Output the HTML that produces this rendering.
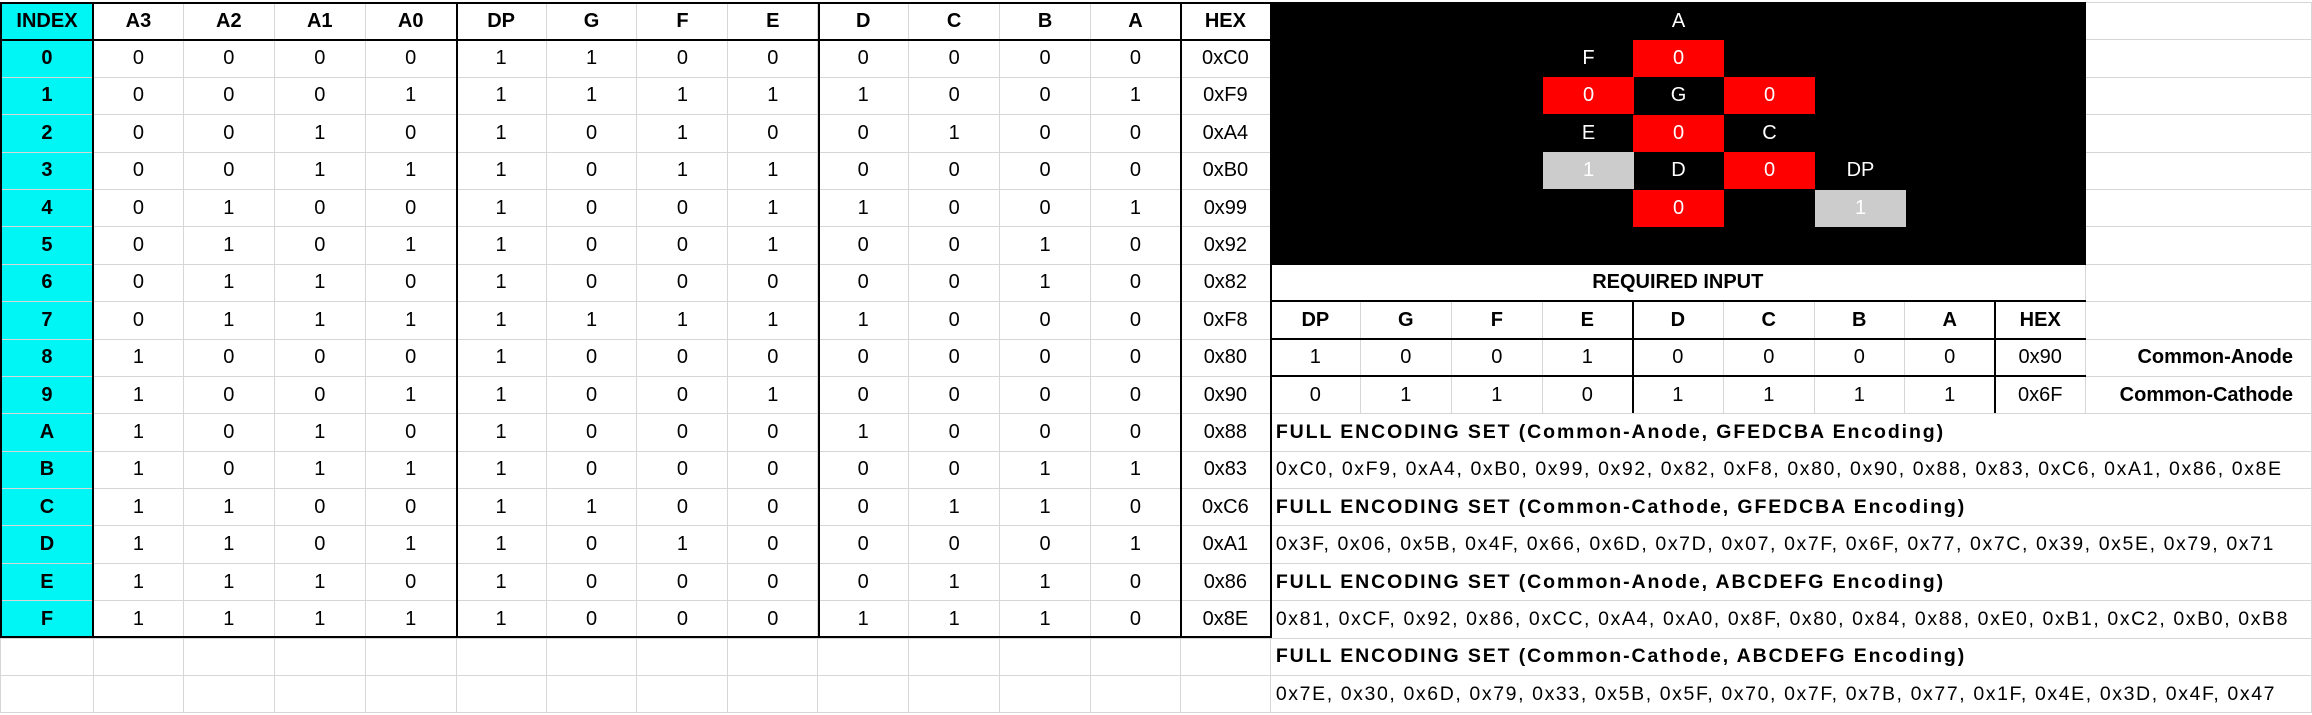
<!DOCTYPE html>
<html><head><meta charset="utf-8"><style>
body{margin:0;background:#fff;width:2312px;height:715px;overflow:hidden;position:relative;font-family:"Liberation Sans",sans-serif;}
table{position:absolute;left:0;top:2px;border-collapse:collapse;table-layout:fixed;}
td{border:1px solid #d6d6d6;height:36.4px;padding:0;text-align:center;font-size:20px;color:#000;white-space:nowrap;overflow:visible;}
td.i{background:#00f5f5;font-weight:bold;}
td.b{font-weight:bold;}
td.t{text-align:left;padding-left:5px;font-size:19.5px;letter-spacing:1.6px;}
td.tb{text-align:left;padding-left:5px;font-weight:bold;font-size:19.5px;letter-spacing:1.9px;}
td.blk{background:#000;border-color:#000;}
td.req{font-weight:bold;}
td.nm{font-weight:bold;text-align:right;padding-right:18px;}
.l{position:absolute;background:#000;}
.s{position:absolute;width:91px;height:37px;line-height:37px;text-align:center;font-size:20px;color:#fff;}
.r{background:#ff0000;}
.g{background:#cccccc;}
</style></head><body>
<table>
<colgroup><col style="width:93px"><col style="width:90px"><col style="width:91px"><col style="width:91px"><col style="width:91px"><col style="width:90px"><col style="width:91px"><col style="width:91px"><col style="width:90px"><col style="width:91px"><col style="width:91px"><col style="width:91px"><col style="width:90px"><col style="width:90px"><col style="width:90px"><col style="width:91px"><col style="width:91px"><col style="width:90px"><col style="width:91px"><col style="width:91px"><col style="width:90px"><col style="width:91px"><col style="width:90px"><col style="width:226px"></colgroup>
<tr><td class="i">INDEX</td><td class="b">A3</td><td class="b">A2</td><td class="b">A1</td><td class="b">A0</td><td class="b">DP</td><td class="b">G</td><td class="b">F</td><td class="b">E</td><td class="b">D</td><td class="b">C</td><td class="b">B</td><td class="b">A</td><td class="b">HEX</td><td class="blk" colspan="9" rowspan="7"></td><td></td></tr>
<tr><td class="i">0</td><td>0</td><td>0</td><td>0</td><td>0</td><td>1</td><td>1</td><td>0</td><td>0</td><td>0</td><td>0</td><td>0</td><td>0</td><td>0xC0</td><td></td></tr>
<tr><td class="i">1</td><td>0</td><td>0</td><td>0</td><td>1</td><td>1</td><td>1</td><td>1</td><td>1</td><td>1</td><td>0</td><td>0</td><td>1</td><td>0xF9</td><td></td></tr>
<tr><td class="i">2</td><td>0</td><td>0</td><td>1</td><td>0</td><td>1</td><td>0</td><td>1</td><td>0</td><td>0</td><td>1</td><td>0</td><td>0</td><td>0xA4</td><td></td></tr>
<tr><td class="i">3</td><td>0</td><td>0</td><td>1</td><td>1</td><td>1</td><td>0</td><td>1</td><td>1</td><td>0</td><td>0</td><td>0</td><td>0</td><td>0xB0</td><td></td></tr>
<tr><td class="i">4</td><td>0</td><td>1</td><td>0</td><td>0</td><td>1</td><td>0</td><td>0</td><td>1</td><td>1</td><td>0</td><td>0</td><td>1</td><td>0x99</td><td></td></tr>
<tr><td class="i">5</td><td>0</td><td>1</td><td>0</td><td>1</td><td>1</td><td>0</td><td>0</td><td>1</td><td>0</td><td>0</td><td>1</td><td>0</td><td>0x92</td><td></td></tr>
<tr><td class="i">6</td><td>0</td><td>1</td><td>1</td><td>0</td><td>1</td><td>0</td><td>0</td><td>0</td><td>0</td><td>0</td><td>1</td><td>0</td><td>0x82</td><td class="req" colspan="9">REQUIRED INPUT</td><td></td></tr>
<tr><td class="i">7</td><td>0</td><td>1</td><td>1</td><td>1</td><td>1</td><td>1</td><td>1</td><td>1</td><td>1</td><td>0</td><td>0</td><td>0</td><td>0xF8</td><td class="b">DP</td><td class="b">G</td><td class="b">F</td><td class="b">E</td><td class="b">D</td><td class="b">C</td><td class="b">B</td><td class="b">A</td><td class="b">HEX</td><td></td></tr>
<tr><td class="i">8</td><td>1</td><td>0</td><td>0</td><td>0</td><td>1</td><td>0</td><td>0</td><td>0</td><td>0</td><td>0</td><td>0</td><td>0</td><td>0x80</td><td>1</td><td>0</td><td>0</td><td>1</td><td>0</td><td>0</td><td>0</td><td>0</td><td>0x90</td><td class="nm">Common-Anode</td></tr>
<tr><td class="i">9</td><td>1</td><td>0</td><td>0</td><td>1</td><td>1</td><td>0</td><td>0</td><td>1</td><td>0</td><td>0</td><td>0</td><td>0</td><td>0x90</td><td>0</td><td>1</td><td>1</td><td>0</td><td>1</td><td>1</td><td>1</td><td>1</td><td>0x6F</td><td class="nm">Common-Cathode</td></tr>
<tr><td class="i">A</td><td>1</td><td>0</td><td>1</td><td>0</td><td>1</td><td>0</td><td>0</td><td>0</td><td>1</td><td>0</td><td>0</td><td>0</td><td>0x88</td><td class="tb" colspan="10">FULL ENCODING SET (Common-Anode, GFEDCBA Encoding)</td></tr>
<tr><td class="i">B</td><td>1</td><td>0</td><td>1</td><td>1</td><td>1</td><td>0</td><td>0</td><td>0</td><td>0</td><td>0</td><td>1</td><td>1</td><td>0x83</td><td class="t" colspan="10">0xC0, 0xF9, 0xA4, 0xB0, 0x99, 0x92, 0x82, 0xF8, 0x80, 0x90, 0x88, 0x83, 0xC6, 0xA1, 0x86, 0x8E</td></tr>
<tr><td class="i">C</td><td>1</td><td>1</td><td>0</td><td>0</td><td>1</td><td>1</td><td>0</td><td>0</td><td>0</td><td>1</td><td>1</td><td>0</td><td>0xC6</td><td class="tb" colspan="10">FULL ENCODING SET (Common-Cathode, GFEDCBA Encoding)</td></tr>
<tr><td class="i">D</td><td>1</td><td>1</td><td>0</td><td>1</td><td>1</td><td>0</td><td>1</td><td>0</td><td>0</td><td>0</td><td>0</td><td>1</td><td>0xA1</td><td class="t" colspan="10">0x3F, 0x06, 0x5B, 0x4F, 0x66, 0x6D, 0x7D, 0x07, 0x7F, 0x6F, 0x77, 0x7C, 0x39, 0x5E, 0x79, 0x71</td></tr>
<tr><td class="i">E</td><td>1</td><td>1</td><td>1</td><td>0</td><td>1</td><td>0</td><td>0</td><td>0</td><td>0</td><td>1</td><td>1</td><td>0</td><td>0x86</td><td class="tb" colspan="10">FULL ENCODING SET (Common-Anode, ABCDEFG Encoding)</td></tr>
<tr><td class="i">F</td><td>1</td><td>1</td><td>1</td><td>1</td><td>1</td><td>0</td><td>0</td><td>0</td><td>1</td><td>1</td><td>1</td><td>0</td><td>0x8E</td><td class="t" colspan="10">0x81, 0xCF, 0x92, 0x86, 0xCC, 0xA4, 0xA0, 0x8F, 0x80, 0x84, 0x88, 0xE0, 0xB1, 0xC2, 0xB0, 0xB8</td></tr>
<tr><td></td><td></td><td></td><td></td><td></td><td></td><td></td><td></td><td></td><td></td><td></td><td></td><td></td><td></td><td class="tb" colspan="10">FULL ENCODING SET (Common-Cathode, ABCDEFG Encoding)</td></tr>
<tr><td></td><td></td><td></td><td></td><td></td><td></td><td></td><td></td><td></td><td></td><td></td><td></td><td></td><td></td><td class="t" colspan="10">0x7E, 0x30, 0x6D, 0x79, 0x33, 0x5B, 0x5F, 0x70, 0x7F, 0x7B, 0x77, 0x1F, 0x4E, 0x3D, 0x4F, 0x47</td></tr>
</table>

<div class="s" style="left:1633px;top:3px">A</div>
<div class="s" style="left:1543px;top:40px">F</div>
<div class="s r" style="left:1633px;top:40px">0</div>
<div class="s r" style="left:1543px;top:77px">0</div>
<div class="s" style="left:1633px;top:77px">G</div>
<div class="s r" style="left:1724px;top:77px">0</div>
<div class="s" style="left:1543px;top:115px">E</div>
<div class="s r" style="left:1633px;top:115px">0</div>
<div class="s" style="left:1724px;top:115px">C</div>
<div class="s g" style="left:1543px;top:152px">1</div>
<div class="s" style="left:1633px;top:152px">D</div>
<div class="s r" style="left:1724px;top:152px">0</div>
<div class="s" style="left:1815px;top:152px">DP</div>
<div class="s r" style="left:1633px;top:190px">0</div>
<div class="s g" style="left:1815px;top:190px">1</div>

<div class="l" style="left:0;top:2px;width:1272px;height:2px"></div>
<div class="l" style="left:0;top:2px;width:2px;height:636px"></div>
<div class="l" style="left:0;top:39px;width:1272px;height:2px"></div>
<div class="l" style="left:0;top:636px;width:1272px;height:2px"></div>
<div class="l" style="left:92px;top:2px;width:2px;height:636px"></div>
<div class="l" style="left:456px;top:2px;width:2px;height:636px"></div>
<div class="l" style="left:818px;top:2px;width:2px;height:636px"></div>
<div class="l" style="left:1180px;top:2px;width:2px;height:636px"></div>
<div class="l" style="left:1270px;top:2px;width:2px;height:636px"></div>
<div class="l" style="left:1270px;top:300px;width:816px;height:2px"></div>
<div class="l" style="left:1270px;top:338px;width:816px;height:2px"></div>
<div class="l" style="left:1270px;top:375px;width:816px;height:2px"></div>
<div class="l" style="left:1632px;top:300px;width:2px;height:113px"></div>
<div class="l" style="left:1994px;top:300px;width:2px;height:113px"></div>
</body></html>
